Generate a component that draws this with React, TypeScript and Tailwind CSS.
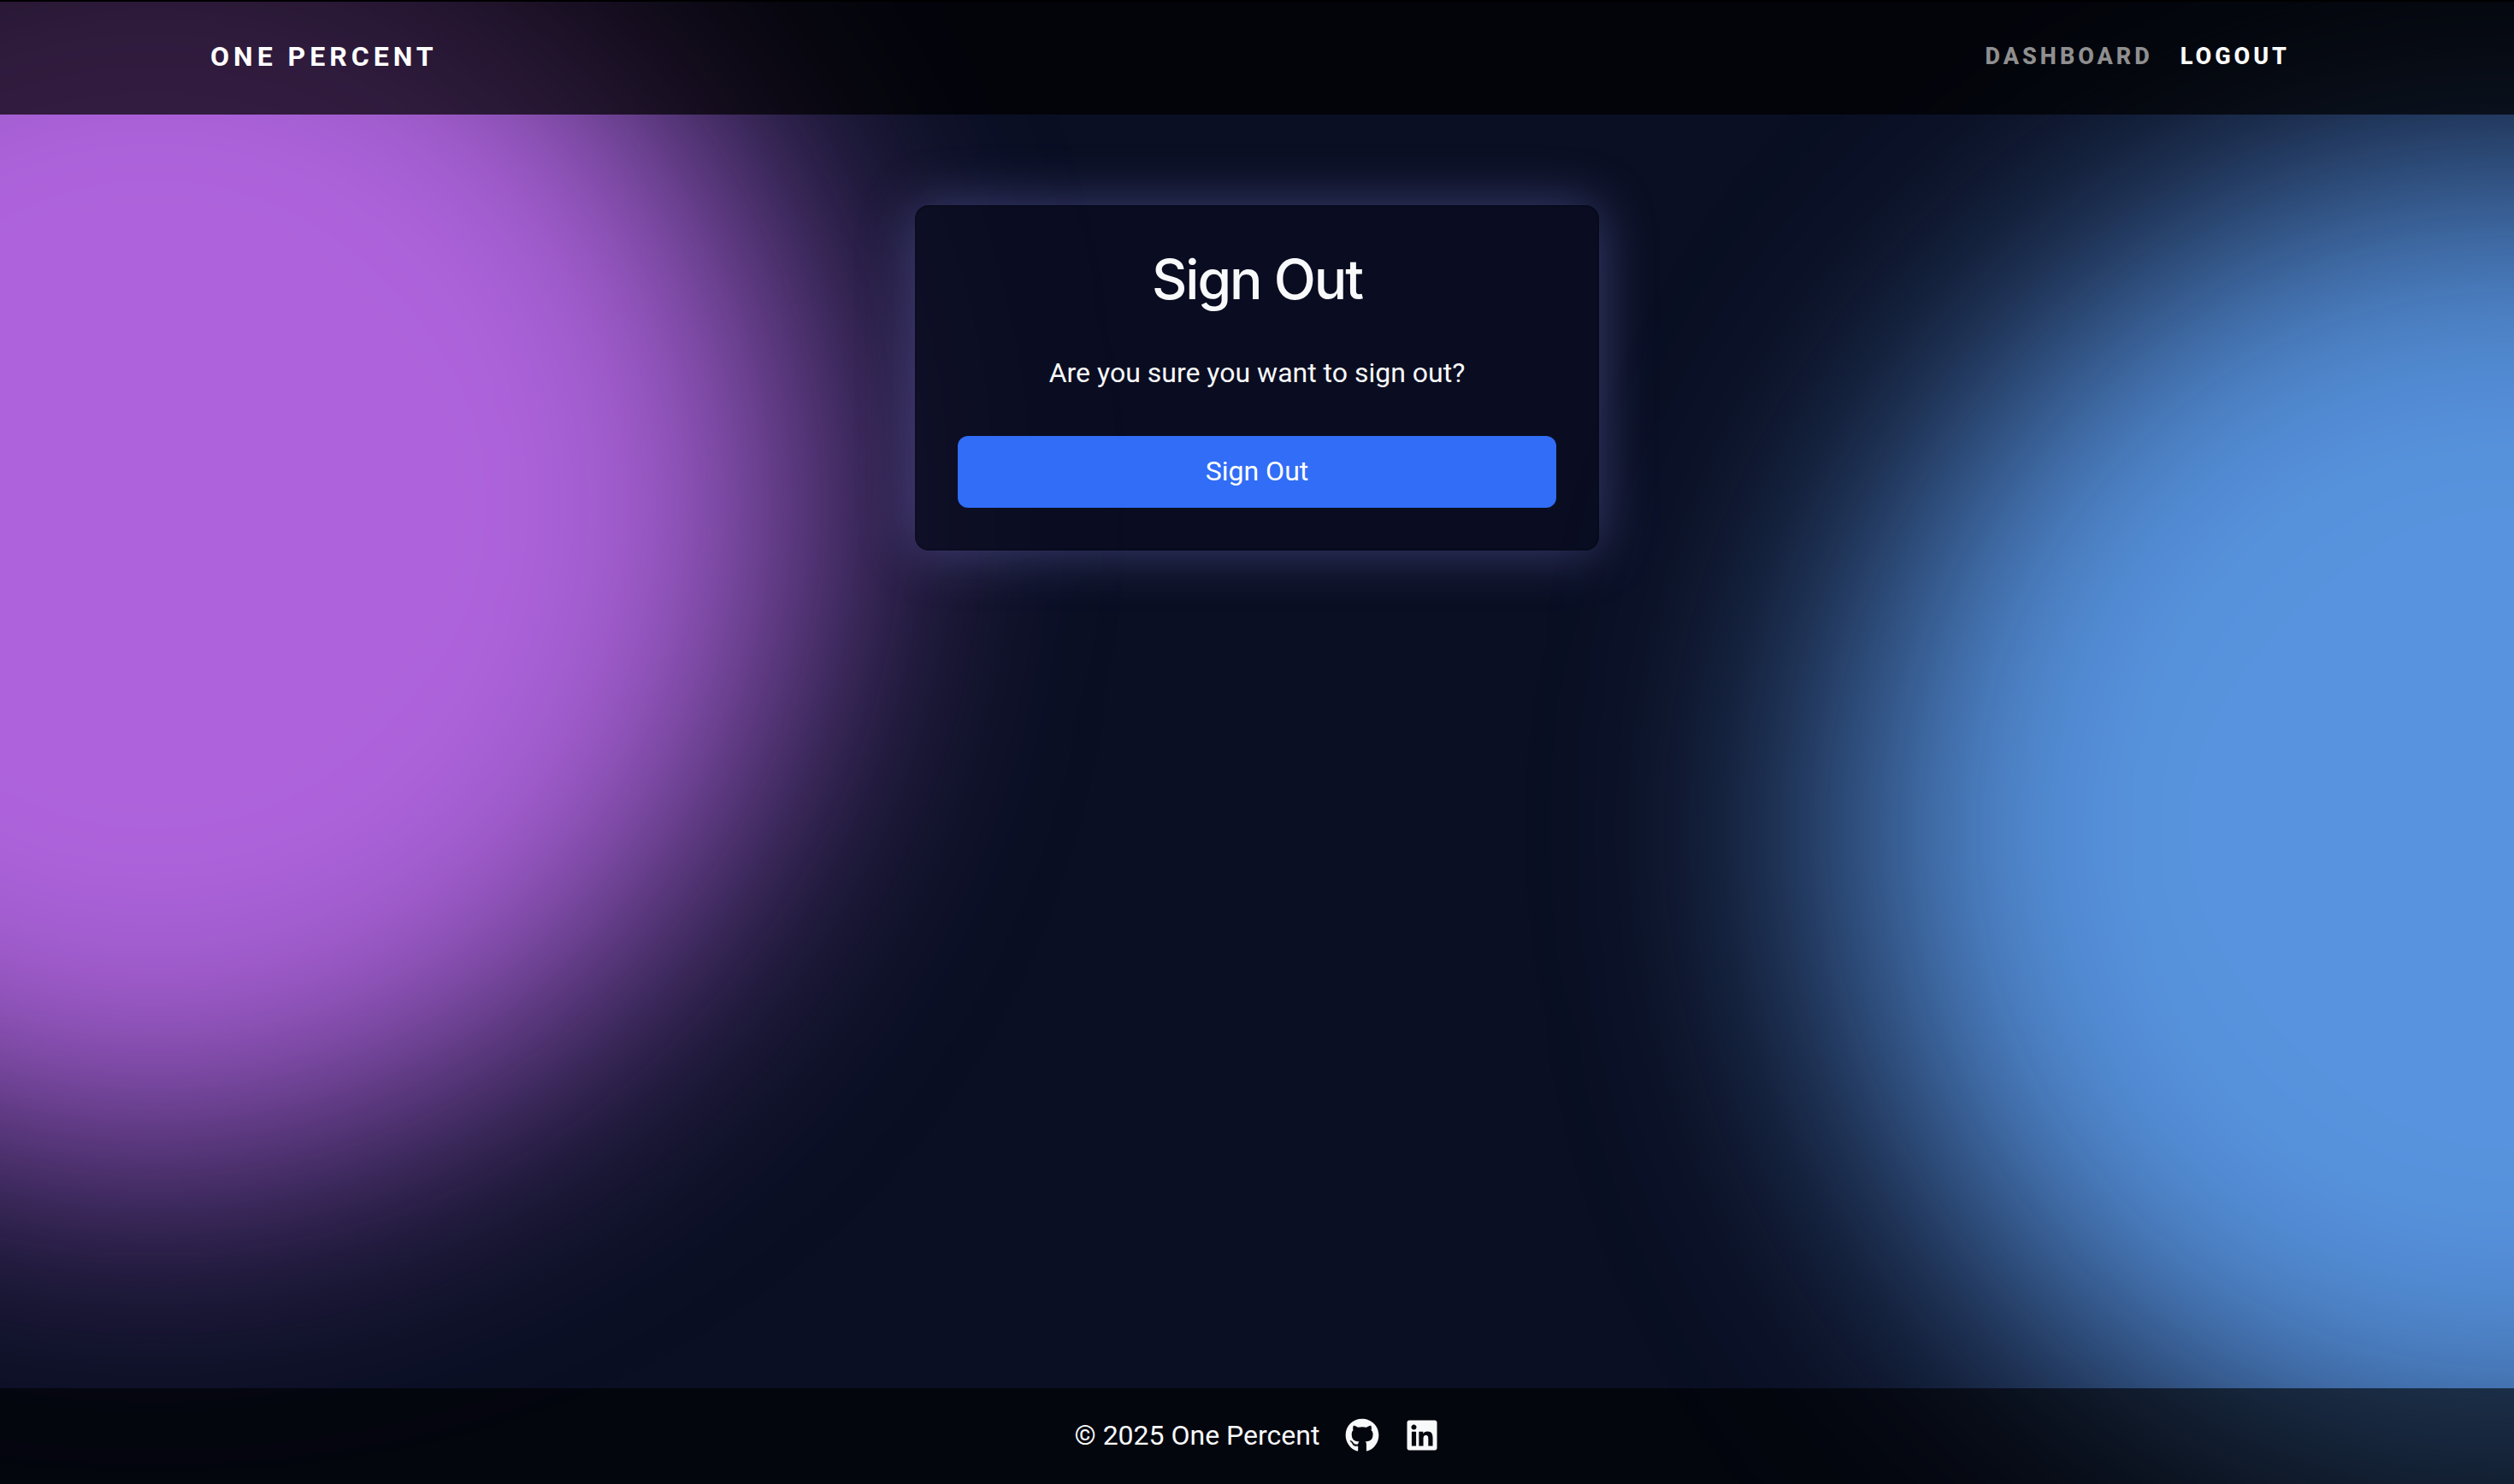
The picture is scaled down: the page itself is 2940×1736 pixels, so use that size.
import { FaGithub, FaLinkedin } from "react-icons/fa";

function Backdrop() {
  return (
    <div aria-hidden="true" className="absolute inset-0 -z-10 overflow-hidden bg-[#0a0f23]">
      <div className="absolute -top-[170px] -left-[580px] size-[1520px] rounded-full bg-[#ae63dc] blur-[160px]" />
      <div className="absolute top-[190px] -right-[780px] size-[1560px] rounded-full bg-[#5793de] blur-[160px]" />
    </div>
  );
}

function Header() {
  return (
    <header className="h-[134px] border-t-2 border-black bg-black/70">
      <nav className="mx-auto flex h-full max-w-[2640px] items-center justify-between px-24 pb-1">
        <a href="#" className="text-[32px] font-bold tracking-[5px] text-white uppercase">
          One Percent
        </a>
        <ul className="flex items-center text-[27px] font-extrabold tracking-[4px] uppercase">
          <li>
            <a href="#" className="px-4 text-[#8f8f90]">
              Dashboard
            </a>
          </li>
          <li>
            <a href="#" className="px-4 text-white">
              Logout
            </a>
          </li>
        </ul>
      </nav>
    </header>
  );
}

function SignOutCard() {
  return (
    <section className="w-[800px] rounded-2xl border-2 border-black/15 bg-[#0a0c20]/80 p-12 text-center shadow-[0_0_64px_rgba(135,135,235,0.4)]">
      <h1 className="font-[Inter,sans-serif] text-[64px] leading-[74px] font-medium tracking-[-2px]">Sign Out</h1>
      <p className="mt-12 text-[32px] leading-12">Are you sure you want to sign out?</p>
      <form className="mt-[50px]" onSubmit={(e) => e.preventDefault()}>
        <button type="submit" className="h-[84px] w-full rounded-xl bg-[#316df6] pb-0.5 text-[32px] leading-12 text-white">
          Sign Out
        </button>
      </form>
    </section>
  );
}

function Footer() {
  return (
    <footer className="flex h-28 items-center justify-center gap-[30px] bg-black/60 pb-0.5 text-[32px] leading-12">
      <p>© 2025 One Percent</p>
      <a href="#" aria-label="GitHub">
        <FaGithub className="h-10 w-auto" />
      </a>
      <a href="#" aria-label="LinkedIn">
        <FaLinkedin className="h-10 w-auto" />
      </a>
    </footer>
  );
}

export default function App() {
  return (
    <div className="relative isolate flex min-h-screen flex-col font-[Roboto,sans-serif] text-[#f8f9fa]">
      <Backdrop />
      <Header />
      <main className="flex flex-1 items-start justify-center pt-[106px] pb-12">
        <SignOutCard />
      </main>
      <Footer />
    </div>
  );
}
